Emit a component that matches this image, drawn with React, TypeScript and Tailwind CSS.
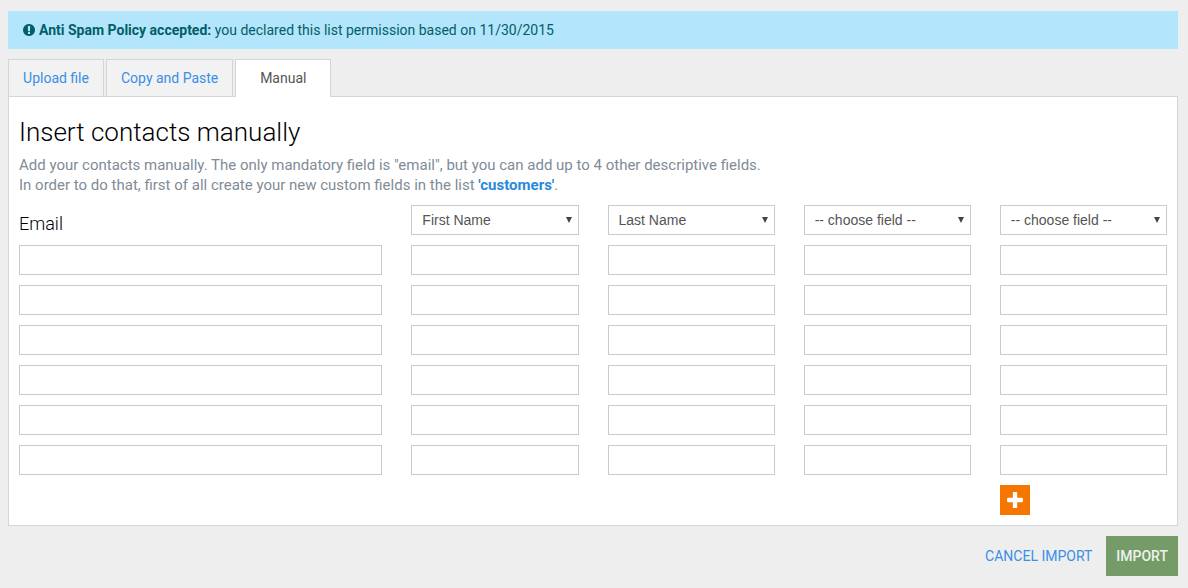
import { useState } from "react";

const TABS = ["Upload file", "Copy and Paste", "Manual"];
const FIELDS = ["First Name", "Last Name"];
const ROW_COUNT = 6;

function AlertIcon() {
  return (
    <svg className="w-3 h-3 shrink-0" viewBox="128 128 1536 1536" fill="currentColor" aria-hidden="true">
      <path d="M896 128q209 0 385.5 103t279.5 279.5 103 385.5-103 385.5-279.5 279.5-385.5 103-385.5-103-279.5-279.5-103-385.5 103-385.5 279.5-279.5 385.5-103zm128 1247v-190q0-14-9-23.5t-22-9.5h-192q-13 0-23 10t-10 23v188q0 13 10 23t23 10h192q13 0 22-9.5t9-23.5zm-2-344l18-621q0-12-10-18-10-8-24-8h-220q-14 0-24 8-10 6-10 18l17 621q0 10 10 17.5t24 7.5h185q14 0 23.5-7.5t10.5-17.5z" />
    </svg>
  );
}

function PlusIcon() {
  return (
    <svg className="w-4 h-4" viewBox="0 0 1408 1408" fill="currentColor" aria-hidden="true">
      <path d="M1408 608v192q0 40-28 68t-68 28h-416v416q0 40-28 68t-68 28h-192q-40 0-68-28t-28-68v-416h-416q-40 0-68-28t-28-68v-192q0-40 28-68t68-28h416v-416q0-40 28-68t68-28h192q40 0 68 28t28 68v416h416q40 0 68 28t28 68z" />
    </svg>
  );
}

function FieldSelect({ index, value, onChange }: { index: number; value: string; onChange: (v: string) => void }) {
  return (
    <div className="relative col-span-2">
      <select
        aria-label={`Field ${index + 1}`}
        value={value}
        onChange={(e) => onChange(e.target.value)}
        className="block w-full h-[30px] appearance-none border border-[#c8cccf] bg-white pl-[10px] pr-6 font-['Liberation_Sans',Arial,sans-serif] text-sm text-[#555]"
      >
        <option value="">-- choose field --</option>
        {FIELDS.map((field) => (
          <option key={field} value={field}>
            {field}
          </option>
        ))}
      </select>
      <svg
        className="pointer-events-none absolute right-[7px] top-3 w-[6px] h-[6px] text-[#444]"
        viewBox="0 0 6 6"
        fill="currentColor"
        aria-hidden="true"
      >
        <path d="M0 0h6L3 6z" />
      </svg>
    </div>
  );
}

export default function App() {
  const [activeTab, setActiveTab] = useState("Manual");
  const [fields, setFields] = useState(["First Name", "Last Name", "", ""]);
  const [rows, setRows] = useState(ROW_COUNT);

  const changeField = (index: number, value: string) => {
    setFields(fields.map((f, i) => (i === index ? value : f)));
  };

  return (
    <div className="min-h-screen bg-[#eeeeee] pl-2 pt-[11px] pb-3 pr-[10px] font-[Roboto,sans-serif] text-sm text-[#555]">
      {/* Policy notice */}
      <div className="flex items-center gap-1 bg-[#b3e5fc] px-[15px] py-[9px] leading-5 text-[#006064]">
        <AlertIcon />
        <p>
          <strong className="font-bold">Anti Spam Policy accepted:</strong> you declared this list permission based on
          11/30/2015
        </p>
      </div>

      {/* Tabs */}
      <div role="tablist" className="mt-[10px] flex gap-[2px]">
        {TABS.map((tab) => (
          <button
            key={tab}
            type="button"
            role="tab"
            aria-selected={activeTab === tab}
            onClick={() => setActiveTab(tab)}
            className={
              activeTab === tab
                ? "relative z-10 -mb-px h-[38px] min-w-24 border border-b-0 border-[#d1d6da] bg-white px-[14px] pb-px text-[#555]"
                : "h-[37px] min-w-24 border border-b-0 border-[#d1d6da] bg-[#f2f2f2] px-[14px] text-[#3a8ee6]"
            }
          >
            {tab}
          </button>
        ))}
      </div>

      {/* Manual insert panel */}
      <form id="contacts" className="border border-[#d1d6da] bg-white p-[10px]" onSubmit={(e) => e.preventDefault()}>
        <h1 className="pt-2 text-[26px] leading-[34px] font-light text-black">Insert contacts manually</h1>
        <p className="mt-[6px] text-[15px] leading-5 text-[#7f8c97]">
          Add your contacts manually. The only mandatory field is "email", but you can add up to 4 other descriptive
          fields.
          <br />
          In order to do that, first of all create your new custom fields in the list{" "}
          <a href="#customers" className="font-bold text-[#2a89dc]">
            'customers'
          </a>
          .
        </p>

        <div className="mt-[10px] grid grid-cols-12 gap-x-[29px] gap-y-[10px]">
          <h2 className="col-span-4 pt-2 text-lg leading-[22px] font-light text-black">Email</h2>
          {fields.map((field, i) => (
            <FieldSelect key={i} index={i} value={field} onChange={(v) => changeField(i, v)} />
          ))}

          {Array.from({ length: rows }, (_, row) => (
            <div key={row} className="contents">
              <input
                type="email"
                aria-label={`Email ${row + 1}`}
                className="col-span-4 h-[30px] w-full border border-[#c8cccf] bg-white px-[10px]"
              />
              {fields.map((_, i) => (
                <input
                  key={i}
                  type="text"
                  aria-label={`Contact ${row + 1}, field ${i + 1}`}
                  className="col-span-2 h-[30px] w-full border border-[#c8cccf] bg-white px-[10px]"
                />
              ))}
            </div>
          ))}

          <button
            type="button"
            aria-label="Add row"
            onClick={() => setRows(rows + 1)}
            className="col-start-11 flex h-[30px] w-[30px] items-center justify-center bg-[#f57600] text-white"
          >
            <PlusIcon />
          </button>
        </div>
      </form>

      {/* Actions */}
      <div className="mt-[10px] flex items-center justify-end gap-[14px]">
        <a href="#cancel" className="text-[#3a8ee6]">
          CANCEL IMPORT
        </a>
        <button type="submit" form="contacts" className="h-10 bg-[#759b68] px-[10px] font-medium text-[#eef3ec]">
          IMPORT
        </button>
      </div>
    </div>
  );
}
